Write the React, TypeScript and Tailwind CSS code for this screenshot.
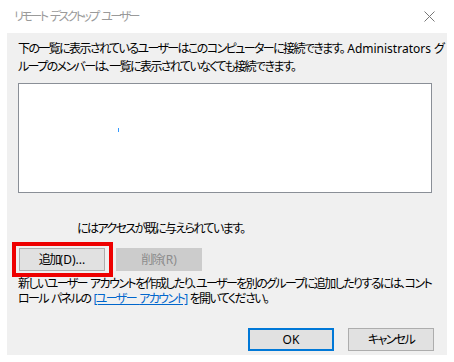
import React from 'react';

const font = "font-['Noto_Sans','Noto_Sans_CJK_JP',sans-serif] [font-feature-settings:'palt']";

// a space that keeps its normal width inside tightly tracked Japanese text
const Sp = () => <span className="tracking-normal"> </span>;

function Button({ children, disabled, primary }: { children: React.ReactNode; disabled?: boolean; primary?: boolean }) {
  const base = 'h-[23px] w-[86px] flex items-center justify-center text-[12px]';
  const look = disabled
    ? 'bg-[#cccccc] border border-[#cccccc] text-[#8d8d8d]'
    : primary
      ? 'bg-[#e1e1e1] border-2 border-[#0078d7] text-black'
      : 'bg-[#e1e1e1] border border-[#adadad] text-black';
  return <div className={`${base} ${look}`}>{children}</div>;
}

export default function App() {
  return (
    <div className={`w-[454px] h-[362px] bg-white flex flex-col tracking-[-1.6px] ${font}`}>
      <div className="h-[33px] flex items-center justify-between pl-[14px] pr-[19px]">
        <span className="text-[12px] text-[#9a9a9a] tracking-[-2.4px]">
          リモート<Sp />デスクトップ<Sp />ユーザー
        </span>
        <svg width="11" height="11" viewBox="0 0 11 11" className="text-[#777]">
          <path d="M0.5 0.5 L10.5 10.5 M10.5 0.5 L0.5 10.5" stroke="currentColor" strokeWidth="1" />
        </svg>
      </div>

      <div className="relative mx-[7px] h-[322px] bg-[#f0f0f0] flex flex-col pl-[11px] pr-[13px] pb-[4px] text-black">
        <p className="pt-[7px] text-[12px] leading-[18px] whitespace-nowrap">
          下の一覧に表示されているユーザーはこのコンピューターに接続できます。
          <span className="tracking-normal"> Administrators </span>グ
          <br />
          ループのメンバーは、一覧に表示されていなくても接続できます。
        </p>

        <div className="relative mt-[7px] h-[110px] w-[414px] bg-white border border-[#8a8f97]">
          <div className="absolute left-[99px] top-[44px] w-px h-[4px] bg-[#3399ff]" />
        </div>

        <p className="mt-[27px] pl-[59px] text-[12px] leading-[18px]">にはアクセスが既に与えられています。</p>

        <div className="mt-[10px] flex gap-[11px] pl-[1px]">
          <Button>
            追加<span className="tracking-normal">(D)...</span>
          </Button>
          <Button disabled>
            削除<span className="tracking-normal">(R)</span>
          </Button>
        </div>

        <div className="absolute left-[5px] top-[209px] w-[101px] h-[35px] border-4 border-[#ee0000]" />

        <p className="mt-[5px] text-[12px] leading-[15px] whitespace-nowrap">
          新しいユーザー<Sp />アカウントを作成したり、ユーザーを別のグループに追加したりするには、コント
          <br />
          ロール<Sp />パネルの<Sp />
          <span className="text-[#0066cc] underline">
            [ユーザー<Sp />アカウント]
          </span>
          <Sp />を開いてください。
        </p>

        <div className="mt-auto flex justify-end gap-[14px]">
          <Button primary>
            <span className="tracking-normal">OK</span>
          </Button>
          <Button>キャンセル</Button>
        </div>
      </div>
    </div>
  );
}
